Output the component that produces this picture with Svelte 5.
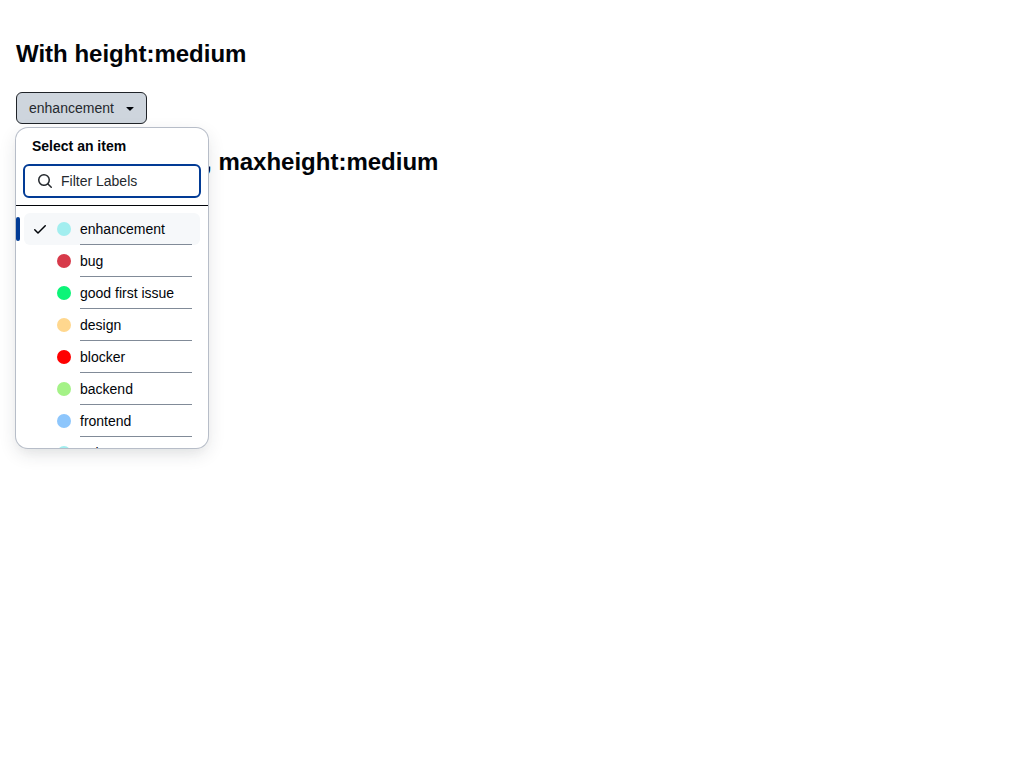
<script>
  const labels = [
    { text: 'enhancement', color: '#a2eeef', selected: true },
    { text: 'bug', color: '#d73a4a' },
    { text: 'good first issue', color: '#0cf478' },
    { text: 'design', color: '#ffd78e' },
    { text: 'blocker', color: '#ff0000' },
    { text: 'backend', color: '#a4f287' },
    { text: 'frontend', color: '#8dc6fc' },
    { text: 'epic', color: '#a2eeef' }
  ];
</script>

<main>
  <section>
    <h1>With height:medium</h1>
    <div class="anchor">
      <button class="trigger">
        <span>enhancement</span>
        <svg width="16" height="16" viewBox="0 0 16 16"><path d="m4.427 7.427 3.396 3.396a.25.25 0 0 0 .354 0l3.396-3.396A.25.25 0 0 0 11.396 7H4.604a.25.25 0 0 0-.177.427Z" /></svg>
      </button>
      <div class="overlay">
        <h2>Select an item</h2>
        <div class="filter">
          <svg width="16" height="16" viewBox="0 0 16 16"><path d="M10.68 11.74a6 6 0 0 1-7.922-8.982 6 6 0 0 1 8.982 7.922l3.04 3.04a.749.749 0 0 1-.326 1.275.749.749 0 0 1-.734-.215ZM11.5 7a4.499 4.499 0 1 0-8.997 0A4.499 4.499 0 0 0 11.5 7Z" /></svg>
          <input placeholder="Filter Labels" />
        </div>
        <ul>
          {#each labels as label}
            <li class:active={label.selected}>
              <span class="check">
                {#if label.selected}
                  <svg width="16" height="16" viewBox="0 0 16 16"><path d="M13.78 4.22a.75.75 0 0 1 0 1.06l-7.25 7.25a.75.75 0 0 1-1.06 0L2.22 9.28a.751.751 0 0 1 .018-1.042.751.751 0 0 1 1.042-.018L6 10.94l6.72-6.72a.75.75 0 0 1 1.06 0Z" /></svg>
                {/if}
              </span>
              <span class="dot"><i style="background: {label.color}"></i></span>
              <span class="text">{label.text}</span>
            </li>
          {/each}
        </ul>
      </div>
    </div>
  </section>
  <section>
    <h1>With height:auto, maxheight:medium</h1>
  </section>
</main>

<style>
  :global(body) { margin: 0; background: #fff; }
  main {
    box-sizing: border-box;
    min-height: 768px;
    padding: 16px;
    color: #010409;
    font: 14px/20px "Liberation Sans", Arial, sans-serif;
  }
  h1 { margin: 0; font-size: 24px; line-height: 36px; font-weight: 700; }
  section:first-child { padding-top: 20px; }
  section:first-child h1 { margin-bottom: 20px; }
  section + section { padding-top: 20px; }
  .anchor { position: relative; height: 32px; }
  .trigger {
    box-sizing: border-box;
    height: 32px;
    display: flex;
    align-items: center;
    gap: 8px;
    padding: 0 8px 0 12px;
    border: 1px solid #1f2328;
    border-radius: 6px;
    background: #d1d9e0;
    background: #ced5dd;
    color: #25292e;
    font: inherit;
  }
  .trigger svg { fill: #010409; }
  .overlay {
    position: absolute;
    left: 0;
    top: 36px;
    width: 192px;
    height: 320px;
    display: flex;
    flex-direction: column;
    overflow: hidden;
    border-radius: 12px;
    background: #fff;
    box-shadow: 0 0 0 1px #b7bdc8, 0 6px 12px -3px #25292e0a, 0 6px 18px 0 #25292e1f;
  }
  h2 { margin: 8px 16px; font-size: 14px; line-height: 20px; font-weight: 700; }
  .filter {
    flex: none;
    display: flex;
    align-items: center;
    gap: 8px;
    box-sizing: border-box;
    height: 34px;
    margin: 0 7px 7px;
    padding: 0 12px;
    border: 2px solid #023b95;
    border-radius: 6px;
  }
  .filter svg { flex: none; fill: #25292e; }
  input {
    width: 100%;
    min-width: 0;
    padding: 0;
    border: 0;
    outline: 0;
    background: none;
    font: inherit;
  }
  input::placeholder { color: #25292e; opacity: 1; }
  ul {
    flex: 1;
    min-height: 0;
    overflow: hidden;
    list-style: none;
    margin: 0;
    padding: 7px 8px;
    border-top: 1px solid #010409;
  }
  li {
    position: relative;
    display: flex;
    gap: 8px;
    height: 32px;
    padding: 0 8px;
    border-radius: 6px;
  }
  .active { background: #f6f8fa; }
  .active::before {
    content: "";
    position: absolute;
    left: -8px;
    top: 4px;
    width: 4px;
    height: 24px;
    border-radius: 6px;
    background: #023b95;
  }
  .check, .dot { width: 16px; display: flex; align-items: center; justify-content: center; }
  .check svg { fill: #010409; }
  .dot i { width: 14px; height: 14px; border-radius: 50%; }
  .text {
    flex: 1;
    line-height: 32px;
    box-shadow: 0 1px 0 #818b98;
    height: 31px;
  }
</style>
